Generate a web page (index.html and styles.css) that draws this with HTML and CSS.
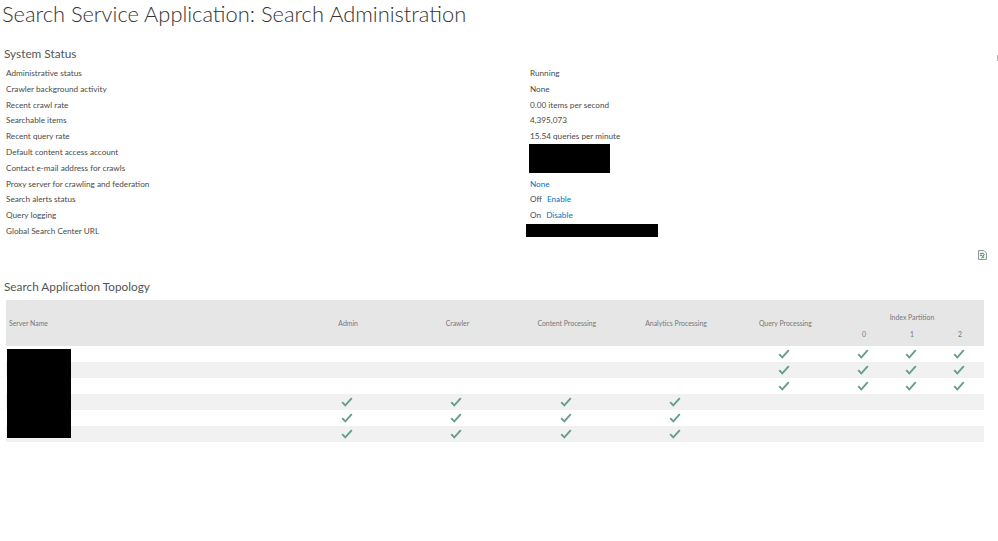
FILE: index.html
```
<!DOCTYPE html>
<html lang="en">
<head>
<meta charset="utf-8">
<title>Search Administration</title>
<link rel="stylesheet" href="styles.css">
</head>
<body>
<svg class="defs" width="0" height="0" aria-hidden="true"><symbol id="chk" viewBox="0 0 12 10"><path d="M1.2 5.2 4.3 8.3 10.8 1.2" fill="none" stroke="#659f8b" stroke-width="1.9"/></symbol></svg>
<main class="page">
  <h1 class="title">Search Service Application: Search Administration</h1>
  <h2 class="section status-head">System Status</h2>
  <dl class="status">
    <dt>Administrative status</dt><dd>Running</dd>
    <dt>Crawler background activity</dt><dd>None</dd>
    <dt>Recent crawl rate</dt><dd>0.00 items per second</dd>
    <dt>Searchable items</dt><dd>4,395,073</dd>
    <dt>Recent query rate</dt><dd>15.54 queries per minute</dd>
    <dt>Default content access account</dt><dd></dd>
    <dt>Contact e-mail address for crawls</dt><dd></dd>
    <dt>Proxy server for crawling and federation</dt><dd><a href="#">None</a></dd>
    <dt>Search alerts status</dt><dd>Off <a class="act" href="#">Enable</a></dd>
    <dt>Query logging</dt><dd>On <a class="act" href="#">Disable</a></dd>
    <dt>Global Search Center URL</dt><dd></dd>
  </dl>
  <div class="export">
    <svg width="9" height="10" viewBox="0 0 9 10" aria-hidden="true"><path d="M.5.5H6L8.5 3V9.5H.5Z" fill="#eef2f4" stroke="#8d9aa3"/><path d="M2 3.5H6M2 5.5H4" stroke="#6d9f45"/><path d="M6.5 4 3.5 8.5M3 4.5 6 8" stroke="#5f9a32"/></svg>
  </div>
  <h2 class="section topo-head">Search Application Topology</h2>
  <table class="topo">
    <colgroup><col class="c-name"><col class="c-w"><col class="c-w"><col class="c-w"><col class="c-w"><col class="c-w"><col class="c-n"><col class="c-n"><col class="c-n"></colgroup>
    <thead>
      <tr>
        <th class="name" rowspan="2">Server Name</th>
        <th rowspan="2">Admin</th><th rowspan="2">Crawler</th><th rowspan="2">Content Processing</th><th rowspan="2">Analytics Processing</th><th rowspan="2">Query Processing</th>
        <th class="group" colspan="3">Index Partition</th>
      </tr>
      <tr><th>0</th><th>1</th><th>2</th></tr>
    </thead>
    <tbody>
      <tr><td></td><td></td><td></td><td></td><td></td><td><svg class="c"><use href="#chk"/></svg></td><td><svg class="c"><use href="#chk"/></svg></td><td><svg class="c"><use href="#chk"/></svg></td><td><svg class="c"><use href="#chk"/></svg></td></tr>
      <tr><td></td><td></td><td></td><td></td><td></td><td><svg class="c"><use href="#chk"/></svg></td><td><svg class="c"><use href="#chk"/></svg></td><td><svg class="c"><use href="#chk"/></svg></td><td><svg class="c"><use href="#chk"/></svg></td></tr>
      <tr><td></td><td></td><td></td><td></td><td></td><td><svg class="c"><use href="#chk"/></svg></td><td><svg class="c"><use href="#chk"/></svg></td><td><svg class="c"><use href="#chk"/></svg></td><td><svg class="c"><use href="#chk"/></svg></td></tr>
      <tr><td></td><td><svg class="c"><use href="#chk"/></svg></td><td><svg class="c"><use href="#chk"/></svg></td><td><svg class="c"><use href="#chk"/></svg></td><td><svg class="c"><use href="#chk"/></svg></td><td></td><td></td><td></td><td></td></tr>
      <tr><td></td><td><svg class="c"><use href="#chk"/></svg></td><td><svg class="c"><use href="#chk"/></svg></td><td><svg class="c"><use href="#chk"/></svg></td><td><svg class="c"><use href="#chk"/></svg></td><td></td><td></td><td></td><td></td></tr>
      <tr><td></td><td><svg class="c"><use href="#chk"/></svg></td><td><svg class="c"><use href="#chk"/></svg></td><td><svg class="c"><use href="#chk"/></svg></td><td><svg class="c"><use href="#chk"/></svg></td><td></td><td></td><td></td><td></td></tr>
    </tbody>
  </table>
  <div class="redact r-account"></div>
  <div class="redact r-url"></div>
  <div class="redact r-servers"></div>
  <div class="edge-mark"></div>
</main>
</body>
</html>
```
FILE: styles.css
```
html, body { margin: 0; padding: 0; background: #fff; }
body { font-family: "Lato", "Open Sans", "Liberation Sans", sans-serif; color: #444; overflow: hidden; }
.defs { position: absolute; }
.page { position: relative; width: 998px; height: 541px; }
.title { margin: 0; padding: 0 0 0 2px; font-size: 21.85px; line-height: 28px; font-weight: 300; color: #333; white-space: nowrap; }
.section { margin: 0; padding-left: 4px; font-size: 11.8px; line-height: 18px; font-weight: 400; color: #555; }
.status-head { margin-top: 17px; }
.status { display: grid; grid-template-columns: 524px 1fr; grid-auto-rows: 15.8px; margin: 3px 0 0; padding-left: 6px; font-size: 8.2px; line-height: 15.8px; color: #4a4a4a; }
.status dt, .status dd { margin: 0; white-space: nowrap; }
.status a { color: #0072c6; text-decoration: none; }
.status .act { margin-left: 3px; }
.export { display: flex; justify-content: flex-end; padding: 10px 11px 0 0; height: 10px; }
.topo-head { margin-top: 18px; }
.topo { border-collapse: collapse; table-layout: fixed; width: 978px; margin: 4px 0 0 6px; }
.c-name { width: 287.5px; }
.c-w { width: 109.3px; }
.c-n { width: 48px; }
.topo th { background: #e6e6e6; height: 23px; padding: 0; font-size: 6.9px; font-weight: 400; color: #777; text-align: center; white-space: nowrap; }
.topo th.name { text-align: left; padding-left: 3px; }
.topo th.group { vertical-align: bottom; height: 21px; padding-bottom: 2px; }
.topo td { height: 16px; padding: 0; text-align: center; line-height: 0; }
.topo tbody tr:nth-child(even) td { background: #f1f1f1; }
.c { width: 12px; height: 10px; margin-left: -2px; }
.redact { position: absolute; background: #000; }
.r-account { left: 529px; top: 144px; width: 81px; height: 29px; }
.r-url { left: 526px; top: 224px; width: 132px; height: 13px; }
.r-servers { left: 7px; top: 349px; width: 64px; height: 89px; }
.edge-mark { position: absolute; left: 997px; top: 55px; width: 1px; height: 6px; background: #b5b5b5; }
```
